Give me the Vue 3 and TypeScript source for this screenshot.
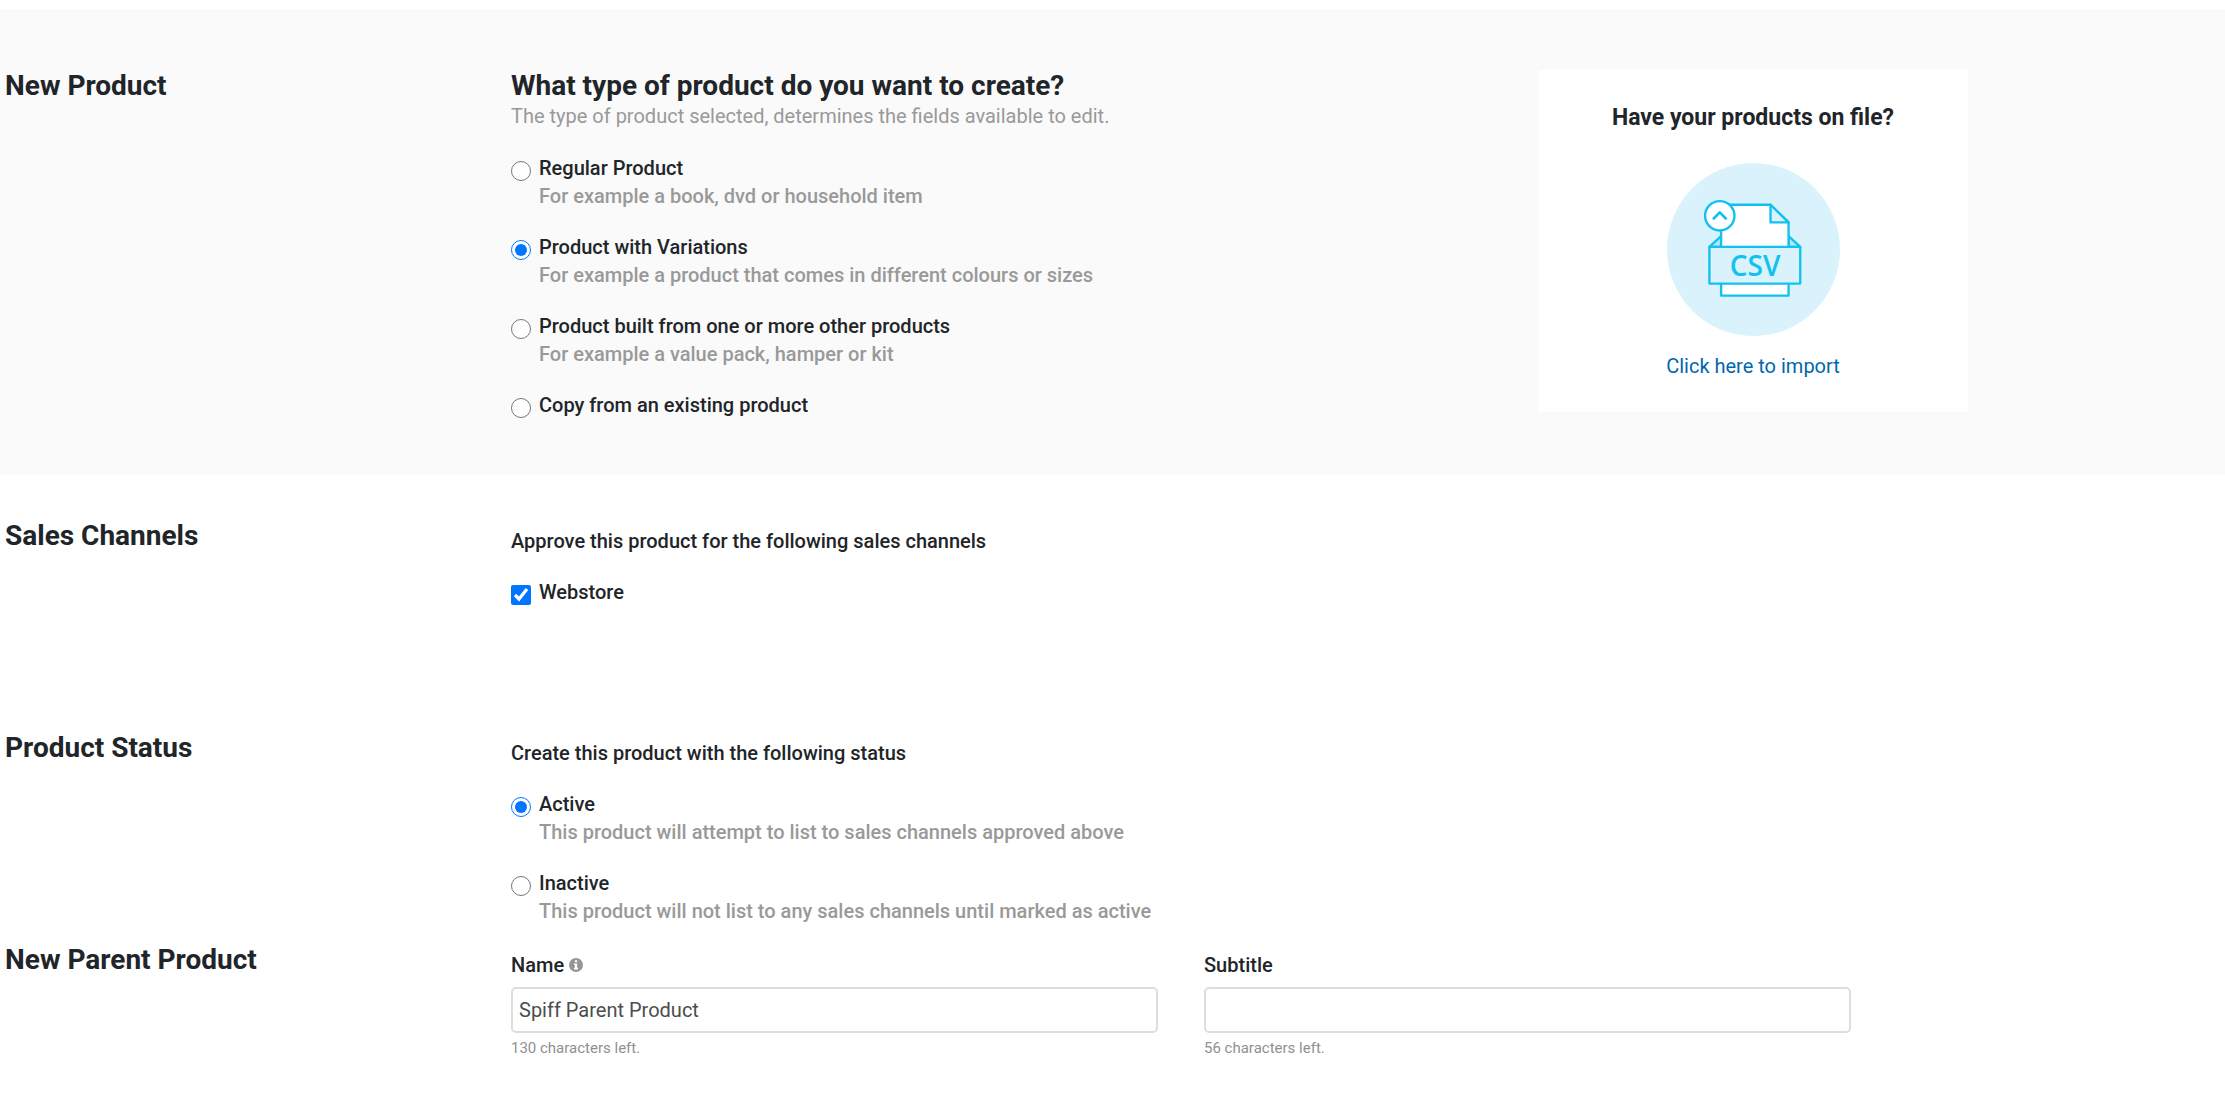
<script setup lang="ts">
import { computed, ref } from 'vue'

interface Choice {
  value: string
  title: string
  hint?: string
}

const NAME_LIMIT = 150
const SUBTITLE_LIMIT = 56

const productTypes: Choice[] = [
  { value: 'regular', title: 'Regular Product', hint: 'For example a book, dvd or household item' },
  { value: 'variations', title: 'Product with Variations', hint: 'For example a product that comes in different colours or sizes' },
  { value: 'bundle', title: 'Product built from one or more other products', hint: 'For example a value pack, hamper or kit' },
  { value: 'copy', title: 'Copy from an existing product' },
]

const statuses: Choice[] = [
  { value: 'active', title: 'Active', hint: 'This product will attempt to list to sales channels approved above' },
  { value: 'inactive', title: 'Inactive', hint: 'This product will not list to any sales channels until marked as active' },
]

const productType = ref('variations')
const webstore = ref(true)
const status = ref('active')
const name = ref('Spiff Parent Product')
const subtitle = ref('')

const nameLeft = computed(() => NAME_LIMIT - name.value.length)
const subtitleLeft = computed(() => SUBTITLE_LIMIT - subtitle.value.length)
</script>

<template>
  <main class="page">
    <section class="section intro">
      <h2 class="heading">New Product</h2>
      <div class="type-picker">
        <h2 class="heading">What type of product do you want to create?</h2>
        <p class="lead">The type of product selected, determines the fields available to edit.</p>
        <div class="choices">
          <label v-for="item in productTypes" :key="item.value" class="choice">
            <input v-model="productType" class="control" type="radio" name="product-type" :value="item.value" />
            <span class="choice-text">
              <span>{{ item.title }}</span>
              <span v-if="item.hint" class="hint">{{ item.hint }}</span>
            </span>
          </label>
        </div>
      </div>
      <aside class="card">
        <h3 class="card-title">Have your products on file?</h3>
        <svg class="csv" viewBox="53 39 518 518" aria-hidden="true">
          <circle cx="312" cy="298" r="259" fill="#d9f2fc" />
          <g stroke="#11c1f0" stroke-width="7" stroke-linejoin="round" stroke-linecap="round">
            <path d="M215 258 180 290H215zM417 258 452 290H417z" fill="#b5e9fa" />
            <path d="M215 164H363L417 217V436H215z" fill="#fff" />
            <path d="M363 164V217H417z" fill="#d9f2fc" />
            <rect x="180" y="290" width="272" height="110" rx="2" fill="#d9f2fc" />
            <circle cx="211" cy="197" r="44" fill="#fff" />
            <path d="M193 205 211 187 229 205" fill="none" stroke-width="8" />
          </g>
          <text x="317" y="378" class="csv-text" text-anchor="middle">CSV</text>
        </svg>
        <a class="import" href="#import">Click here to import</a>
      </aside>
    </section>

    <section class="section">
      <h2 class="heading">Sales Channels</h2>
      <div class="body">
        <p class="prompt">Approve this product for the following sales channels</p>
        <label class="choice">
          <input v-model="webstore" class="control" type="checkbox" />
          <span class="choice-text">Webstore</span>
        </label>
      </div>
    </section>

    <section class="section">
      <h2 class="heading">Product Status</h2>
      <div class="body">
        <p class="prompt">Create this product with the following status</p>
        <div class="choices">
          <label v-for="item in statuses" :key="item.value" class="choice">
            <input v-model="status" class="control" type="radio" name="status" :value="item.value" />
            <span class="choice-text">
              <span>{{ item.title }}</span>
              <span class="hint">{{ item.hint }}</span>
            </span>
          </label>
        </div>
      </div>
    </section>

    <section class="section">
      <h2 class="heading">New Parent Product</h2>
      <div class="body fields">
        <div class="field">
          <label class="field-label" for="product-name">
            Name
            <svg class="info" viewBox="0 0 14 14" aria-hidden="true">
              <circle cx="7" cy="7" r="7" fill="#969696" />
              <path d="M5.9 2.2h2.2v2H5.9zM5 5.4h3.1v4.4H9v1.6H5V9.8h.9V7H5z" fill="#fff" />
            </svg>
          </label>
          <input id="product-name" v-model="name" class="text-box" type="text" />
          <p class="left">{{ nameLeft }} characters left.</p>
        </div>
        <div class="field">
          <label class="field-label" for="product-subtitle">Subtitle</label>
          <input id="product-subtitle" v-model="subtitle" class="text-box" type="text" />
          <p class="left">{{ subtitleLeft }} characters left.</p>
        </div>
      </div>
    </section>
  </main>
</template>

<style>
body {
  background: #fff;
}
</style>

<style scoped>
.page {
  padding-top: 9px;
  font-family: Roboto, 'Liberation Sans', sans-serif;
  font-size: 20px;
  line-height: 28px;
  color: #212529;
}

h2,
h3,
p {
  margin: 0;
}

.section {
  display: grid;
  grid-template-columns: 506fr 1714fr;
  align-items: start;
  min-height: 212px;
  padding-left: 5px;
}

.section:last-child {
  min-height: 0;
}

.intro {
  grid-template-columns: 506fr 1027fr 430fr 257fr;
  padding-top: 61px;
  padding-bottom: 56px;
  margin-bottom: 45px;
  background: #fafafa;
}

.heading {
  font-size: 28px;
  line-height: 32px;
  font-weight: 700;
}

.lead {
  color: #999;
}

.type-picker .choices {
  margin-top: 24px;
}

.body {
  padding-top: 7px;
}

.prompt {
  margin-bottom: 23px;
  font-weight: 500;
}

.choices {
  display: flex;
  flex-direction: column;
  gap: 23px;
}

.choice {
  display: flex;
  align-items: flex-start;
  gap: 8px;
  font-weight: 500;
}

.control {
  flex: none;
  width: 20px;
  height: 20px;
  margin: 7px 0 0;
  accent-color: #0075ff;
}

.choice-text {
  display: flex;
  flex-direction: column;
}

.hint {
  color: #999;
}

.card {
  display: flex;
  flex-direction: column;
  align-items: center;
  padding: 34px 16px 32px;
  background: #fff;
}

.card-title {
  font-size: 23px;
  line-height: 28px;
  font-weight: 700;
}

.csv {
  width: 173px;
  height: 173px;
  margin: 31px 0 16px;
}

.csv-text {
  font-family: 'Open Sans', sans-serif;
  font-size: 84px;
  font-weight: 600;
  fill: #11c1f0;
}

.import {
  color: #0067b0;
  text-decoration: none;
}

.fields {
  display: grid;
  grid-template-columns: 647fr 647fr 328fr;
  column-gap: 46px;
}

.field {
  display: flex;
  flex-direction: column;
}

.field-label {
  display: flex;
  align-items: center;
  gap: 5px;
  font-weight: 500;
}

.info {
  width: 14px;
  height: 14px;
}

.text-box {
  box-sizing: border-box;
  width: 100%;
  height: 46px;
  margin: 8px 0 5px;
  padding: 0 6px;
  border: 2px solid #dedede;
  border-radius: 5px;
  background: #fff;
  color: #4d4d4d;
  font: inherit;
}

.left {
  font-size: 15px;
  line-height: 20px;
  color: #909090;
}
</style>
